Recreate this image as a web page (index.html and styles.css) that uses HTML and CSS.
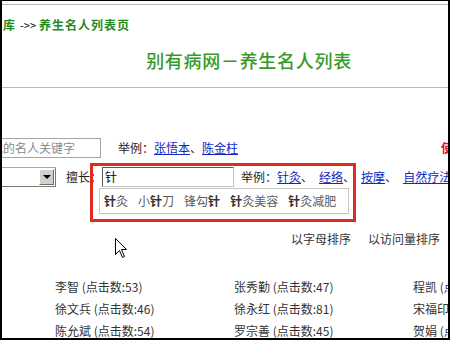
FILE: index.html
```html
<!DOCTYPE html>
<html lang="zh-CN">
    <head>
        <meta charset="UTF-8">
        <title>别有病网－养生名人列表</title>
        <link rel="stylesheet" href="styles.css">
    </head>
    <body>
        <div class="frame">
            <div class="rule rule-top"></div>
            <div class="crumb">
                <span class="crumb-cut">名人库</span><span class="crumb-sep">-&gt;&gt;</span><span>养生名人列表页</span>
            </div>
            <h1 class="title">别有病网－养生名人列表</h1>
            <div class="rule rule-mid"></div>

            <!-- search by name -->
            <div class="search-row row-name">
                <input class="name-input" type="text" placeholder="输入要查找的名人关键字">
                <span class="label">举例：</span>
                <a href="#">张悟本</a><span>、</span><a href="#">陈金柱</a>
                <span class="help">使用帮助</span>
            </div>

            <!-- search by speciality -->
            <div class="search-row row-skill">
                <div class="fake-select"><span class="select-btn"></span></div>
                <span class="label skill-label">擅长：</span>
                <div class="skill-box">
                    <input class="skill-input" type="text" value="针">
                    <div class="suggest">
                        <span><b>针</b>灸</span>
                        <span>小<b>针</b>刀</span>
                        <span>锋勾<b>针</b></span>
                        <span><b>针</b>灸美容</span>
                        <span><b>针</b>灸减肥</span>
                    </div>
                </div>
                <span class="label example-label">举例：</span>
                <a href="#">针灸</a><span class="sep">、</span>
                <a href="#">经络</a><span class="sep">、</span>
                <a href="#">按摩</a><span class="sep">、</span>
                <a href="#">自然疗法</a>
            </div>

            <div class="sort-row">
                <span>以字母排序</span>
                <span>以访问量排序</span>
            </div>

            <div class="people">
                <span>李智 (点击数:53)</span>
                <span>张秀勤 (点击数:47)</span>
                <span>程凯 (点击数:62)</span>
                <span>徐文兵 (点击数:46)</span>
                <span>徐永红 (点击数:81)</span>
                <span>宋福印 (点击数:39)</span>
                <span>陈允斌 (点击数:54)</span>
                <span>罗宗善 (点击数:45)</span>
                <span>贺娟 (点击数:41)</span>
            </div>

            <!-- annotation + mouse pointer laid over the page -->
            <div class="highlight"></div>
            <svg class="cursor" width="13" height="21" viewBox="0 0 13 21">
                <path d="M0.5 0.5 L0.5 16.5 L4.5 12.5 L7.5 19.5 L9.5 18.5 L6.5 11.5 L11.5 11.5 Z" fill="#fff" stroke="#000" stroke-width="1"/>
            </svg>
        </div>
    </body>
</html>
```

FILE: styles.css
```css
body {
    margin: 0;
    background: #fff;
    font-family: "Noto Sans CJK SC", "DejaVu Sans", sans-serif;
    font-size: 12px;
    color: #333;
}
.frame {
    position: relative;
    width: 450px;
    height: 340px;
    box-sizing: border-box;
    border: solid #000;
    border-width: 1px 2px 2px 2px;
    overflow: hidden;
    white-space: nowrap;
}
.rule {
    border-top: 1px solid #b4bcbc;
}
.rule-top {
    margin-top: 3px;
}
.rule-mid {
    margin-top: 15px;
}
.crumb {
    margin-top: 13px;
    height: 14px;
    line-height: 14px;
    font-weight: bold;
    letter-spacing: 1px;
    color: #1f8a1f;
}
.crumb-cut {
    margin-left: -25px;
}
.crumb-sep {
    font-weight: normal;
    font-size: 11px;
    letter-spacing: 0;
    color: #000;
    margin: 0 3px 0 4px;
}
.title {
    margin: 16px 0 0 0;
    padding-left: 48px;
    height: 24px;
    line-height: 24px;
    text-align: center;
    font-size: 18px;
    font-weight: 500;
    letter-spacing: 0.7px;
    color: #389a28;
}
.search-row {
    display: flex;
    align-items: center;
    height: 20px;
    line-height: 20px;
}
.search-row > * {
    flex-shrink: 0;
}
.row-name {
    margin-top: 50px;
}
.row-skill {
    margin-top: 9px;
}
.search-row a {
    color: #1426c0;
    text-decoration: underline;
}
.label {
    color: #222;
}
.name-input {
    width: 160px;
    height: 20px;
    margin-left: -61px;
    margin-right: 17px;
    padding: 0 1px;
    box-sizing: border-box;
    border: 1px solid #a5a5a5;
    font: inherit;
    outline: none;
}
.name-input::placeholder {
    color: #8a8a8a;
}
.help {
    margin-left: 203px;
    font-weight: bold;
    color: #e01010;
}
.fake-select {
    display: flex;
    justify-content: flex-end;
    align-items: center;
    width: 100px;
    height: 20px;
    margin-left: -46px;
    box-sizing: border-box;
    border: 1px solid #7a7a7a;
    border-top-color: #a8a8a8;
    background: #fff;
}
.select-btn {
    display: flex;
    justify-content: center;
    align-items: center;
    width: 15px;
    height: 16px;
    margin-right: 1px;
    box-sizing: border-box;
    background: #d4d0c8;
    border: 1px solid;
    border-color: #fff #6f6f6f #6f6f6f #fff;
}
.select-btn::after {
    content: "";
    border-left: 4px solid transparent;
    border-right: 4px solid transparent;
    border-top: 4px solid #000;
}
.skill-label {
    margin-left: 10px;
}
.skill-box {
    position: relative;
}
.skill-input {
    display: block;
    width: 132px;
    height: 20px;
    padding: 0 2px;
    box-sizing: border-box;
    border: 1px solid;
    border-color: #5a5a5a #c4c4c4 #c4c4c4 #5a5a5a;
    font: inherit;
    color: #000;
    outline: none;
}
.suggest {
    position: absolute;
    top: 21px;
    left: -3px;
    display: flex;
    gap: 10px;
    width: 250px;
    height: 26px;
    padding-left: 4px;
    box-sizing: border-box;
    border: 1px solid #c6c6c6;
    background: #fff;
    line-height: 24px;
    color: #5c5c5c;
}
.suggest b {
    color: #333;
}
.example-label {
    margin-left: 7px;
}
.sep {
    margin-right: 6px;
}
.sort-row {
    display: flex;
    gap: 17px;
    margin-top: 44px;
    padding-left: 289px;
    height: 16px;
    line-height: 16px;
    color: #333;
}
.people {
    display: grid;
    grid-template-columns: repeat(3, 179px);
    grid-auto-rows: 22px;
    margin-top: 29px;
    padding-left: 53px;
    line-height: 22px;
    color: #333;
}
.highlight {
    position: absolute;
    left: 88px;
    top: 162px;
    width: 266px;
    height: 59px;
    box-sizing: border-box;
    border: 3px solid #e22a1e;
}
.cursor {
    position: absolute;
    left: 113px;
    top: 237px;
}
```
